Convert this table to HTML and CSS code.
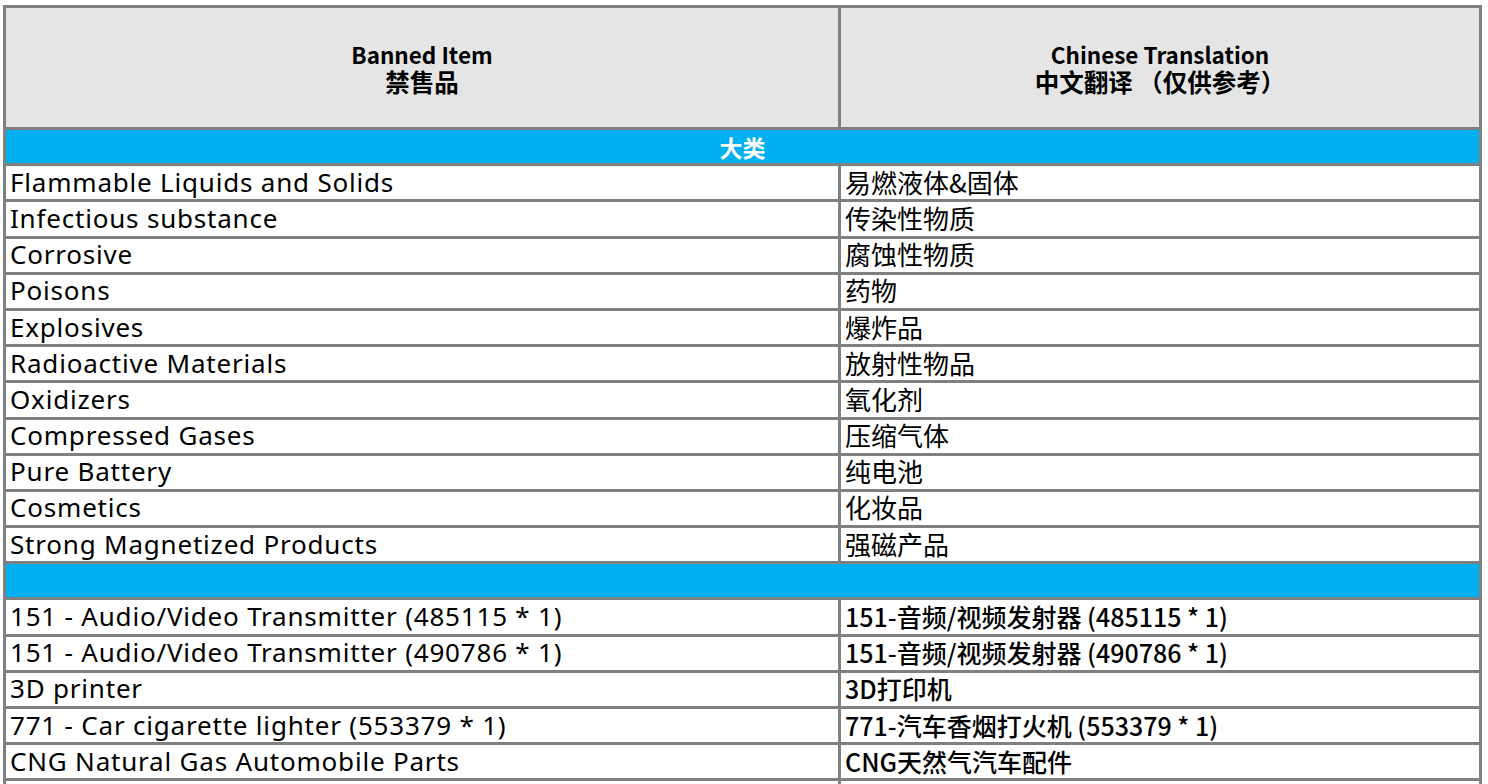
FILE: index.html
```html
<!DOCTYPE html>
<html lang="zh-CN">
<head>
<meta charset="utf-8">
<title>Banned Items</title>
<link rel="stylesheet" href="styles.css">
</head>
<body>
<table class="sheet">
  <colgroup>
    <col class="col-en">
    <col class="col-cn">
  </colgroup>
  <thead>
    <tr class="head-row">
      <th><span class="line">Banned Item</span><span class="line cjk">禁售品</span></th>
      <th><span class="line">Chinese Translation</span><span class="line cjk">中文翻译 （仅供参考）</span></th>
    </tr>
  </thead>
  <tbody>
    <tr class="band"><td colspan="2">大类</td></tr>
    <tr><td class="en">Flammable Liquids and Solids</td><td class="cn">易燃液体&amp;固体</td></tr>
    <tr><td class="en">Infectious substance</td><td class="cn">传染性物质</td></tr>
    <tr><td class="en">Corrosive</td><td class="cn">腐蚀性物质</td></tr>
    <tr><td class="en">Poisons</td><td class="cn">药物</td></tr>
    <tr><td class="en">Explosives</td><td class="cn">爆炸品</td></tr>
    <tr><td class="en">Radioactive Materials</td><td class="cn">放射性物品</td></tr>
    <tr><td class="en">Oxidizers</td><td class="cn">氧化剂</td></tr>
    <tr><td class="en">Compressed Gases</td><td class="cn">压缩气体</td></tr>
    <tr><td class="en">Pure Battery</td><td class="cn">纯电池</td></tr>
    <tr><td class="en">Cosmetics</td><td class="cn">化妆品</td></tr>
    <tr><td class="en">Strong Magnetized Products</td><td class="cn">强磁产品</td></tr>
    <tr class="band"><td colspan="2"></td></tr>
    <tr><td class="en">151 - Audio/Video Transmitter (485115 * 1)</td><td class="cn cn-item">151-音频/视频发射器 (485115 * 1)</td></tr>
    <tr><td class="en">151 - Audio/Video Transmitter (490786 * 1)</td><td class="cn cn-item">151-音频/视频发射器 (490786 * 1)</td></tr>
    <tr><td class="en">3D printer</td><td class="cn cn-item">3D打印机</td></tr>
    <tr><td class="en">771 - Car cigarette lighter (553379 * 1)</td><td class="cn cn-item">771-汽车香烟打火机 (553379 * 1)</td></tr>
    <tr><td class="en">CNG Natural Gas Automobile Parts</td><td class="cn cn-item">CNG天然气汽车配件</td></tr>
    <tr><td class="en"></td><td class="cn cn-item"></td></tr>
  </tbody>
</table>
</body>
</html>
```

FILE: styles.css
```css
html, body {
  margin: 0;
  padding: 0;
  background: #ffffff;
}

body {
  padding: 5px 0 0 3px;
  font-family: "Noto Sans", "Noto Sans CJK SC", sans-serif;
  color: #000000;
}

.sheet {
  width: 1479px;
  table-layout: fixed;
  border-collapse: separate;
  border-spacing: 3px;
  background: #808080;
}

.col-en { width: 832px; }
.col-cn { width: 638px; }

.head-row th {
  height: 119px;
  padding: 0;
  background: #e5e5e5;
  font-family: "Noto Sans CJK SC", sans-serif;
  font-weight: 700;
  font-size: 22.5px;
  line-height: 28px;
  text-align: center;
  vertical-align: middle;
}

.line {
  display: block;
  height: 28px;
}

.line.cjk {
  font-size: 24.5px;
}

td {
  height: 33.2px;
  padding: 0 0 2px 4px;
  box-sizing: border-box;
  background: #ffffff;
  vertical-align: middle;
  white-space: nowrap;
}

.band td {
  background: #00b0f0;
  color: #ffffff;
  font-family: "Noto Sans CJK SC", sans-serif;
  font-weight: 700;
  font-size: 23px;
  line-height: 30px;
  text-align: center;
  padding: 0;
}

.en {
  font-family: "Noto Sans", "Noto Sans CJK SC", sans-serif;
  font-weight: 400;
  font-size: 26px;
  letter-spacing: 0.8px;
  line-height: 30px;
}

.cn {
  font-family: "Noto Sans CJK SC", sans-serif;
  font-size: 26px;
  line-height: 30px;
}

.cn-item {
  font-weight: 500;
  font-size: 25px;
}
```
